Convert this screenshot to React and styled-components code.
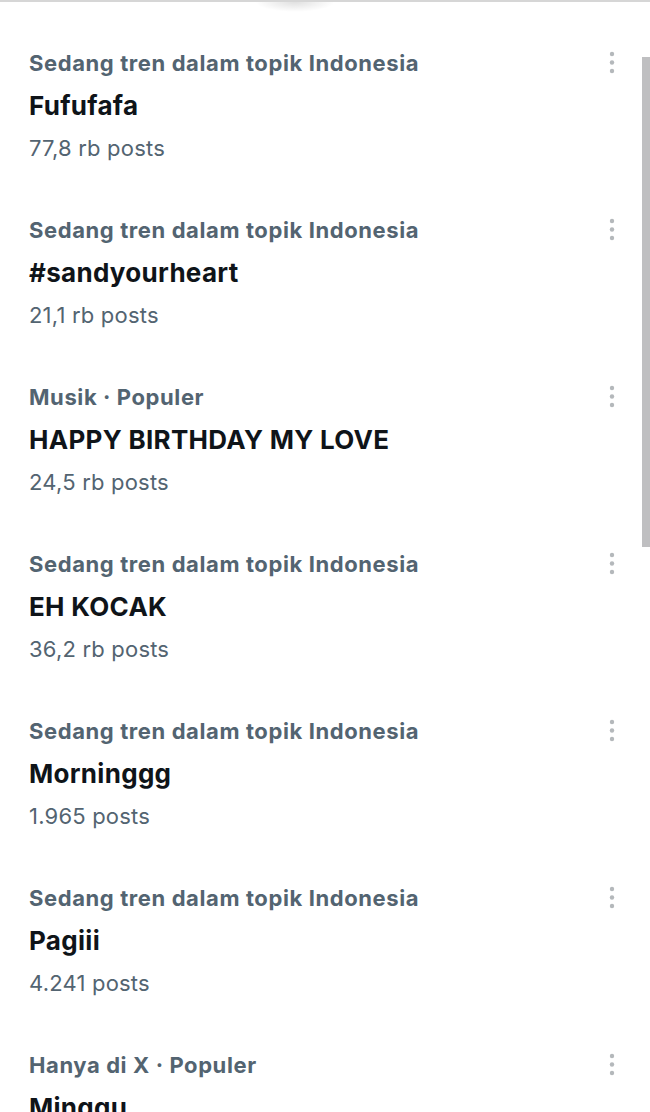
import React from "react";
import styled, { createGlobalStyle } from "styled-components";

const trends = [
  { category: "Sedang tren dalam topik Indonesia", title: "Fufufafa", posts: "77,8 rb posts" },
  { category: "Sedang tren dalam topik Indonesia", title: "#sandyourheart", posts: "21,1 rb posts" },
  { category: "Musik · Populer", title: "HAPPY BIRTHDAY MY LOVE", posts: "24,5 rb posts" },
  { category: "Sedang tren dalam topik Indonesia", title: "EH KOCAK", posts: "36,2 rb posts" },
  { category: "Sedang tren dalam topik Indonesia", title: "Morninggg", posts: "1.965 posts" },
  { category: "Sedang tren dalam topik Indonesia", title: "Pagiii", posts: "4.241 posts" },
  { category: "Hanya di X · Populer", title: "Minggu", posts: "12,4 rb posts" },
];

const GlobalStyle = createGlobalStyle`
  html, body {
    margin: 0;
    padding: 0;
    background: #fff;
  }
  body {
    font-family: Inter, Roboto, "Noto Sans", sans-serif;
  }
`;

const Screen = styled.div`
  position: relative;
  width: 650px;
  height: 1112px;
  overflow: hidden;
  background: #fff;
  border-top: 2px solid #d6d6d6;
  box-sizing: border-box;

  &::before {
    content: "";
    position: absolute;
    top: 0;
    left: 255px;
    width: 80px;
    height: 10px;
    background: radial-gradient(ellipse at 50% 0%, rgba(0, 0, 0, 0.12), rgba(0, 0, 0, 0) 70%);
  }
`;

const List = styled.div`
  display: flex;
  flex-direction: column;
  padding-top: 20px;
`;

const Item = styled.div`
  display: flex;
  justify-content: space-between;
  align-items: flex-start;
  padding: 26px 28px 26px 29px;
`;

const Texts = styled.div`
  display: flex;
  flex-direction: column;
`;

const Category = styled.div`
  font-size: 22px;
  line-height: 30px;
  font-weight: 700;
  color: #536471;
  letter-spacing: 0.6px;
`;

const Title = styled.div`
  margin-top: 10px;
  font-size: 26px;
  line-height: 36px;
  font-weight: 700;
  color: #0f1419;
  letter-spacing: 0.3px;
`;

const Posts = styled.div`
  margin-top: 9px;
  font-size: 22px;
  line-height: 30px;
  font-weight: 400;
  color: #536471;
  letter-spacing: 0.2px;
`;

const More = styled.div`
  display: flex;
  align-items: center;
  justify-content: center;
  width: 20px;
  height: 30px;
`;

const Scrollbar = styled.div`
  position: absolute;
  top: 55px;
  right: 0;
  width: 8px;
  height: 490px;
  background: #bfbfc1;
`;

const Dots = () => (
  <svg width="6" height="24" viewBox="0 0 6 24">
    <circle cx="3" cy="3" r="2.2" fill="#b4b8bb" />
    <circle cx="3" cy="11.5" r="2.2" fill="#b4b8bb" />
    <circle cx="3" cy="20" r="2.2" fill="#b4b8bb" />
  </svg>
);

const App = () => (
  <>
    <GlobalStyle />
    <Screen>
      <List>
        {trends.map((t, i) => (
          <Item key={i}>
            <Texts>
              <Category>{t.category}</Category>
              <Title>{t.title}</Title>
              <Posts>{t.posts}</Posts>
            </Texts>
            <More>
              <Dots />
            </More>
          </Item>
        ))}
      </List>
      <Scrollbar />
    </Screen>
  </>
);

export default App;
